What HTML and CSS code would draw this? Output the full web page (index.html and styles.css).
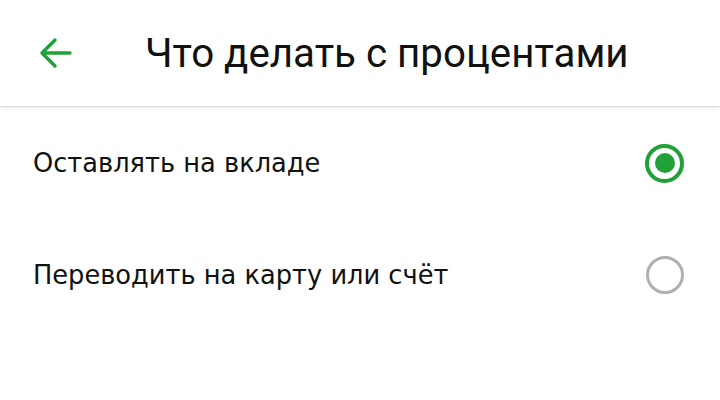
FILE: index.html
```html
<!DOCTYPE html>
<html lang="ru">
<head>
<meta charset="utf-8">
<link rel="stylesheet" href="styles.css">
</head>
<body>
<header class="bar">
  <button class="back" aria-label="Назад">
    <svg width="36" height="36" viewBox="0 0 36 36"><path d="M32 18H5M17 5L4 18l13 13" fill="none" stroke="#21a038" stroke-width="3.4" stroke-linecap="round" stroke-linejoin="round"/></svg>
  </button>
  <h1 class="title">Что делать с процентами</h1>
</header>
<main class="list">
  <div class="row">
    <span class="label">Оставлять на вкладе</span>
    <span class="radio on"></span>
  </div>
  <div class="row">
    <span class="label">Переводить на карту или счёт</span>
    <span class="radio"></span>
  </div>
</main>
</body>
</html>
```
FILE: styles.css
```css
html, body { margin: 0; padding: 0; background: #fff; }
body { width: 720px; height: 400px; overflow: hidden; font-family: Roboto, "Noto Sans", sans-serif; color: #111; }
.bar {
  height: 106px;
  display: flex;
  align-items: center;
  box-shadow: 0 1px 2px rgba(0,0,0,0.12), 0 3px 6px rgba(0,0,0,0.05);
  position: relative;
  z-index: 1;
  background: #fff;
}
.back {
  border: 0; background: none; padding: 0;
  margin-left: 38px;
  width: 36px; height: 36px;
  display: flex;
}
.title {
  margin: 0 0 0 71px;
  font-size: 40.3px;
  font-weight: 400;
  color: #111;
}
.list { display: flex; flex-direction: column; padding-top: 1px; }
.row {
  height: 112px;
  display: flex;
  align-items: center;
  justify-content: space-between;
  padding: 0 36px 0 33px;
}
.label { font-size: 25.7px; font-family: "DejaVu Sans", sans-serif; color: #111; }
.radio {
  width: 32px; height: 32px;
  border-radius: 50%;
  border: 3.5px solid #b0b0b0;
  box-sizing: content-box;
  display: flex; align-items: center; justify-content: center;
}
.radio.on { border: 4px solid #21a038; width: 31px; height: 31px; }
.radio.on::after {
  content: "";
  width: 20px; height: 20px; border-radius: 50%;
  background: #21a038;
}
```
